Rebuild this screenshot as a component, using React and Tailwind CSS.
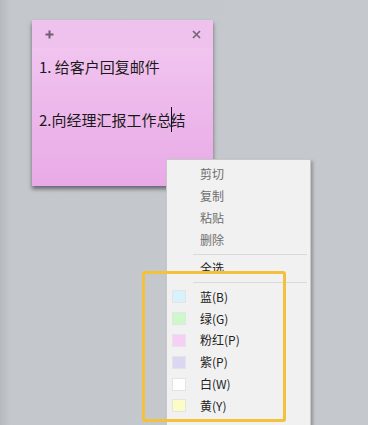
import React from "react";

const FONT = { fontFamily: '"Microsoft YaHei", "Noto Sans CJK SC", "Noto Sans", sans-serif' };

const MENU = ["剪切", "复制", "粘贴", "删除"];
const COLORS = [
  { label: "蓝(B)", swatch: "bg-[#d8f2fb]" },
  { label: "绿(G)", swatch: "bg-[#cdf8c9]" },
  { label: "粉红(P)", swatch: "bg-[#f5cff5]" },
  { label: "紫(P)", swatch: "bg-[#ddd6f3]" },
  { label: "白(W)", swatch: "bg-[#ffffff]" },
  { label: "黄(Y)", swatch: "bg-[#fbfcc6]" },
];

function Separator({ h }) {
  return (
    <div className={`flex items-center pl-[26px] pr-[3px] ${h}`}>
      <div className="h-px w-full bg-[#dadada]" />
    </div>
  );
}

function StickyNote() {
  return (
    <div className="absolute left-[32px] top-[20px] flex h-[166px] w-[181px] flex-col bg-[linear-gradient(to_bottom,#f3c9f1,#e8aae6)] shadow-[0_3px_4px_rgba(40,40,50,0.6)]">
      <div className="flex h-[28px] items-center justify-between bg-[#efc1ed] pl-[13px] pr-[12px]">
        <svg width="9" height="9" viewBox="0 0 9 9">
          <path d="M4.5 0.5 V8.5 M0.5 4.5 H8.5" stroke="#6f5f70" strokeWidth="2" />
        </svg>
        <svg width="9" height="9" viewBox="0 0 9 9">
          <path d="M1 1 L8 8 M8 1 L1 8" stroke="#75657a" strokeWidth="1.7" />
        </svg>
      </div>
      <div className="flex flex-col gap-[30px] pl-[7px] pt-[8px] text-[15px] leading-[21px] text-[#1a1a1a]">
        <div>1. 给客户回复邮件</div>
        <div className="flex items-center">
          <span>2.向经理汇报工作总</span>
          <span className="mx-[-1px] h-[25px] w-px bg-[#111]" />
          <span>结</span>
        </div>
      </div>
    </div>
  );
}

function ContextMenu() {
  return (
    <div className="absolute left-[166px] top-[159px] flex h-[280px] w-[145px] flex-col border border-[#c8c8c8] bg-[#f1f1f1] pt-[3px] text-[12px] shadow-[2px_2px_3px_rgba(0,0,0,0.25)]">
      {MENU.map(m => (
        <div key={m} className="flex h-[22px] items-center pl-[33px] text-[#6e6e6e]">{m}</div>
      ))}
      <Separator h="h-[6px]" />
      <div className="flex h-[22px] items-center pl-[33px] text-[#1a1a1a]">全选</div>
      <Separator h="h-[7px]" />
      {COLORS.map(c => (
        <div key={c.label} className="flex h-[21.8px] items-center text-[#222]">
          <div className={`ml-[5px] h-[13px] w-[14px] border border-[#e4e4e4] ${c.swatch}`} />
          <span className="ml-[14px]">{c.label}</span>
        </div>
      ))}
    </div>
  );
}

export default function App() {
  return (
    <div style={FONT} className="relative h-[425px] w-[368px] overflow-hidden bg-[linear-gradient(to_right,#b6b9bd,#c4c7cb_10px,#c5c8cc)]">
      <StickyNote />
      <ContextMenu />
      <div className="absolute left-[142px] top-[271px] h-[151px] w-[144px] rounded-[3px] border-[3px] border-[#f4c13c]" />
    </div>
  );
}
